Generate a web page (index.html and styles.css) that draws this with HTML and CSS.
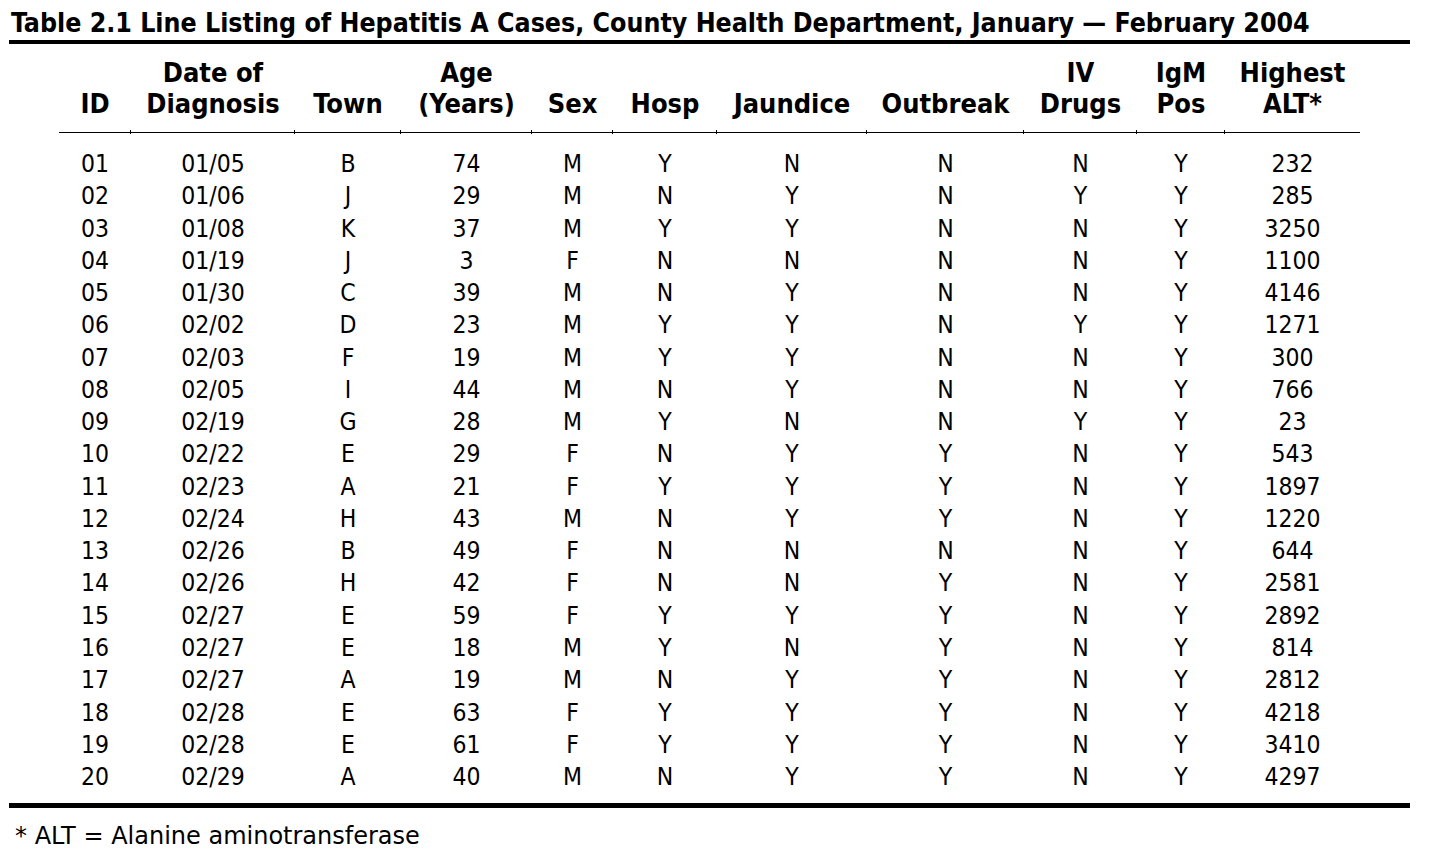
FILE: index.html
```html
<!DOCTYPE html>
<html lang="en">
<head>
<meta charset="utf-8">
<title>Table 2.1 Line Listing of Hepatitis A Cases</title>
<link rel="stylesheet" href="styles.css">
</head>
<body>
<div class="page">
  <h1 class="title">Table 2.1 Line Listing of Hepatitis A Cases, County Health Department, January — February 2004</h1>
  <div class="rule"></div>
  <table class="listing">
    <colgroup>
      <col class="c-id"><col class="c-date"><col class="c-town"><col class="c-age"><col class="c-sex"><col class="c-hosp"><col class="c-jaun"><col class="c-out"><col class="c-iv"><col class="c-igm"><col class="c-alt">
    </colgroup>
    <thead>
      <tr>
        <th>ID</th>
        <th>Date of<br>Diagnosis</th>
        <th>Town</th>
        <th>Age<br>(Years)</th>
        <th>Sex</th>
        <th>Hosp</th>
        <th>Jaundice</th>
        <th>Outbreak</th>
        <th>IV<br>Drugs</th>
        <th>IgM<br>Pos</th>
        <th>Highest<br>ALT*</th>
      </tr>
    </thead>
    <tbody>
      <tr class="first"><td>01</td><td>01/05</td><td>B</td><td>74</td><td>M</td><td>Y</td><td>N</td><td>N</td><td>N</td><td>Y</td><td>232</td></tr>
      <tr><td>02</td><td>01/06</td><td>J</td><td>29</td><td>M</td><td>N</td><td>Y</td><td>N</td><td>Y</td><td>Y</td><td>285</td></tr>
      <tr><td>03</td><td>01/08</td><td>K</td><td>37</td><td>M</td><td>Y</td><td>Y</td><td>N</td><td>N</td><td>Y</td><td>3250</td></tr>
      <tr><td>04</td><td>01/19</td><td>J</td><td>3</td><td>F</td><td>N</td><td>N</td><td>N</td><td>N</td><td>Y</td><td>1100</td></tr>
      <tr><td>05</td><td>01/30</td><td>C</td><td>39</td><td>M</td><td>N</td><td>Y</td><td>N</td><td>N</td><td>Y</td><td>4146</td></tr>
      <tr><td>06</td><td>02/02</td><td>D</td><td>23</td><td>M</td><td>Y</td><td>Y</td><td>N</td><td>Y</td><td>Y</td><td>1271</td></tr>
      <tr><td>07</td><td>02/03</td><td>F</td><td>19</td><td>M</td><td>Y</td><td>Y</td><td>N</td><td>N</td><td>Y</td><td>300</td></tr>
      <tr><td>08</td><td>02/05</td><td>I</td><td>44</td><td>M</td><td>N</td><td>Y</td><td>N</td><td>N</td><td>Y</td><td>766</td></tr>
      <tr><td>09</td><td>02/19</td><td>G</td><td>28</td><td>M</td><td>Y</td><td>N</td><td>N</td><td>Y</td><td>Y</td><td>23</td></tr>
      <tr><td>10</td><td>02/22</td><td>E</td><td>29</td><td>F</td><td>N</td><td>Y</td><td>Y</td><td>N</td><td>Y</td><td>543</td></tr>
      <tr><td>11</td><td>02/23</td><td>A</td><td>21</td><td>F</td><td>Y</td><td>Y</td><td>Y</td><td>N</td><td>Y</td><td>1897</td></tr>
      <tr><td>12</td><td>02/24</td><td>H</td><td>43</td><td>M</td><td>N</td><td>Y</td><td>Y</td><td>N</td><td>Y</td><td>1220</td></tr>
      <tr><td>13</td><td>02/26</td><td>B</td><td>49</td><td>F</td><td>N</td><td>N</td><td>N</td><td>N</td><td>Y</td><td>644</td></tr>
      <tr><td>14</td><td>02/26</td><td>H</td><td>42</td><td>F</td><td>N</td><td>N</td><td>Y</td><td>N</td><td>Y</td><td>2581</td></tr>
      <tr><td>15</td><td>02/27</td><td>E</td><td>59</td><td>F</td><td>Y</td><td>Y</td><td>Y</td><td>N</td><td>Y</td><td>2892</td></tr>
      <tr><td>16</td><td>02/27</td><td>E</td><td>18</td><td>M</td><td>Y</td><td>N</td><td>Y</td><td>N</td><td>Y</td><td>814</td></tr>
      <tr><td>17</td><td>02/27</td><td>A</td><td>19</td><td>M</td><td>N</td><td>Y</td><td>Y</td><td>N</td><td>Y</td><td>2812</td></tr>
      <tr><td>18</td><td>02/28</td><td>E</td><td>63</td><td>F</td><td>Y</td><td>Y</td><td>Y</td><td>N</td><td>Y</td><td>4218</td></tr>
      <tr><td>19</td><td>02/28</td><td>E</td><td>61</td><td>F</td><td>Y</td><td>Y</td><td>Y</td><td>N</td><td>Y</td><td>3410</td></tr>
      <tr class="last"><td>20</td><td>02/29</td><td>A</td><td>40</td><td>M</td><td>N</td><td>Y</td><td>Y</td><td>N</td><td>Y</td><td>4297</td></tr>
    </tbody>
  </table>
  <div class="rule rule-bottom"></div>
  <p class="footnote">* ALT = Alanine aminotransferase</p>
</div>
</body>
</html>
```
FILE: styles.css
```css
html, body {
  margin: 0;
  padding: 0;
  background: #ffffff;
}

body {
  color: #000000;
  font-family: "DejaVu Sans Condensed", "DejaVu Sans", "Liberation Sans", sans-serif;
  font-stretch: condensed;
}

.page {
  width: 1401px;
  padding-left: 9px;
  display: flex;
  flex-direction: column;
}

.title {
  margin: 0;
  padding: 6px 0 0 2px;
  font-size: 26.5px;
  line-height: 34px;
  font-weight: bold;
  white-space: nowrap;
}

.rule {
  height: 4px;
  background: #000000;
}

.rule-bottom {
  height: 5px;
  margin-top: 10px;
}

.listing {
  margin: 13px 0 0 50px;
  border-collapse: collapse;
  border-spacing: 0;
  table-layout: fixed;
  width: 1301px;
}

.c-id { width: 72px; }
.c-date { width: 164px; }
.c-town { width: 106px; }
.c-age { width: 131px; }
.c-sex { width: 81px; }
.c-hosp { width: 104px; }
.c-jaun { width: 150px; }
.c-out { width: 157px; }
.c-iv { width: 113px; }
.c-igm { width: 88px; }
.c-alt { width: 135px; }

.listing th {
  position: relative;
  padding: 0 0 13px 0;
  font-size: 27px;
  line-height: 31px;
  font-weight: bold;
  text-align: center;
  vertical-align: bottom;
  border-bottom: 1px solid #000000;
  white-space: nowrap;
}

.listing th + th::before {
  content: "";
  position: absolute;
  left: -1px;
  bottom: -2px;
  width: 1px;
  height: 4px;
  background: #000000;
}

.listing td {
  padding: 0;
  font-size: 24.5px;
  line-height: 32.26px;
  text-align: center;
  white-space: nowrap;
}

.listing tr.first td {
  padding-top: 15px;
}

.footnote {
  margin: 12px 0 0 6px;
  font-size: 24px;
  line-height: 32px;
  font-stretch: normal;
  font-family: "DejaVu Sans", "Liberation Sans", sans-serif;
}
```
